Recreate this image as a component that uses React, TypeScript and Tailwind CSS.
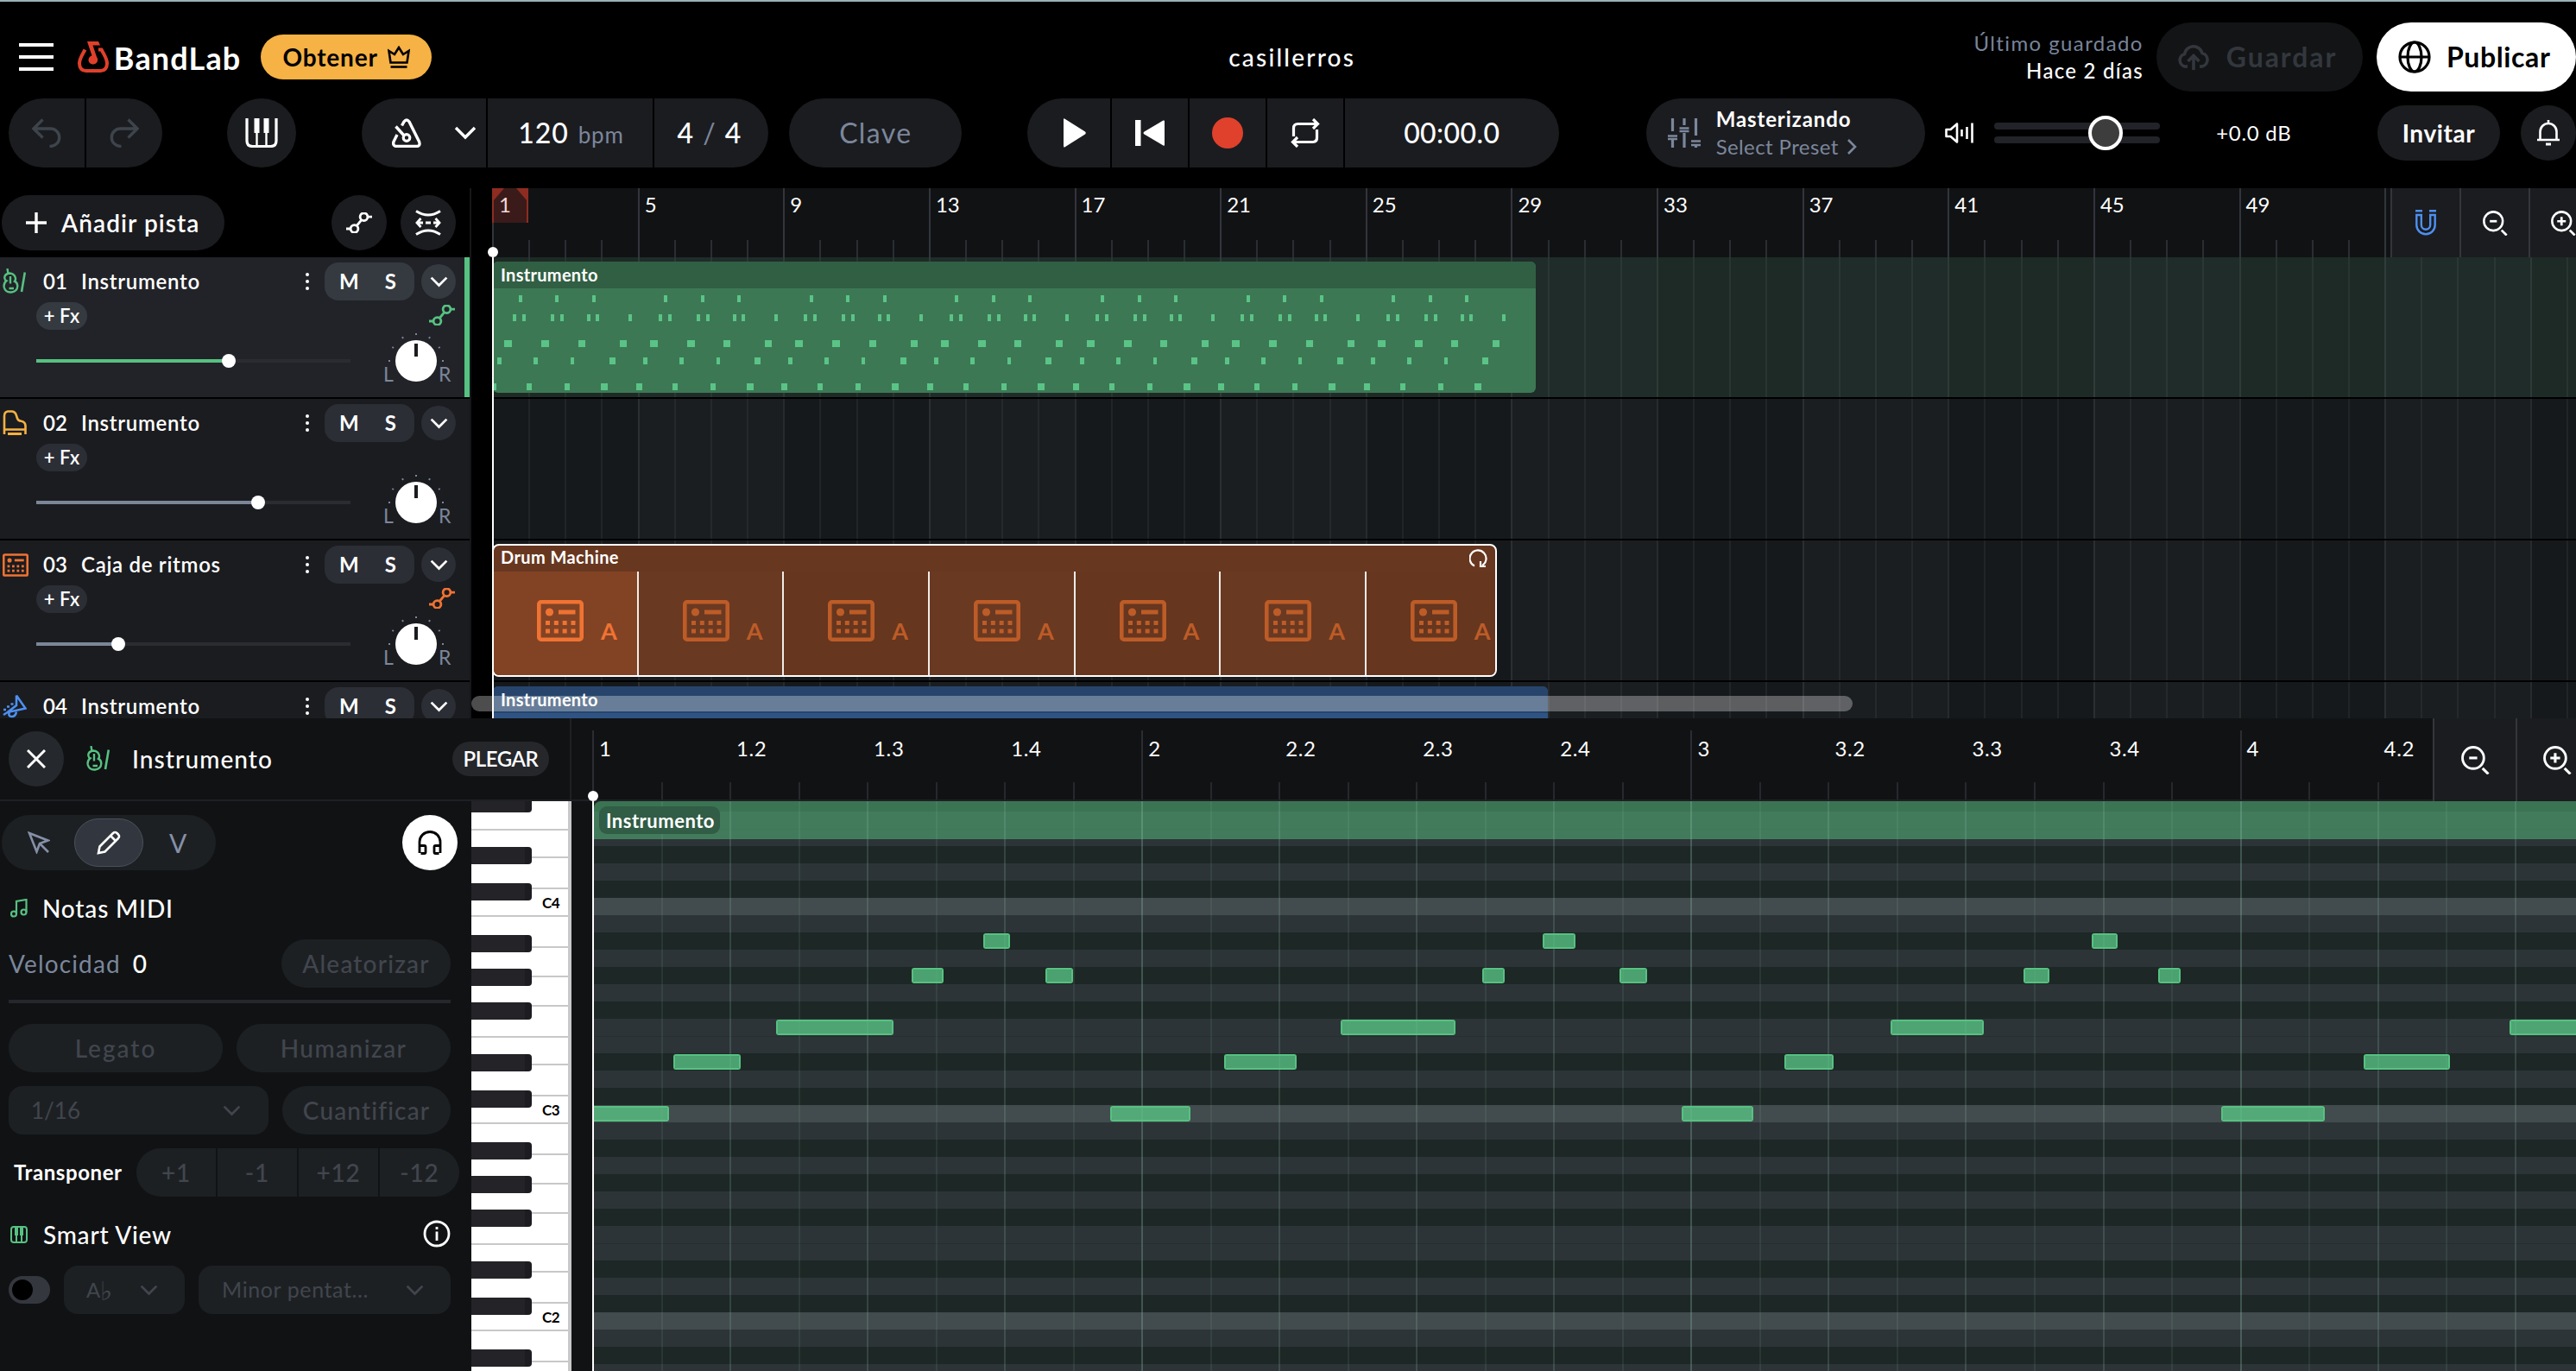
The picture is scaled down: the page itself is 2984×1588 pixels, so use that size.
import type { ReactNode } from 'react';

const BAR_NUMBERS = [1, 5, 9, 13, 17, 21, 25, 29, 33, 37, 41, 45, 49, 53];

type NoteRow = { y: string; notes: [number, number][] };

/** One four-bar phrase of the arrangement clip: x offset and width of each note. */
const PHRASE: NoteRow[] = [
  { y: 'top-[39px]', notes: [[29.5, 4], [72, 4], [114.5, 4]] },
  { y: 'top-[61px]', notes: [[23, 4], [34, 4], [67, 4], [78, 4], [109, 4], [119, 4], [157, 4]] },
  { y: 'top-[91px]', notes: [[13, 9], [56, 9], [98.5, 8], [146.5, 8]] },
  { y: 'top-[111px]', notes: [[5, 5], [47, 5], [90, 4], [134.5, 7]] },
  { y: 'top-[141px]', notes: [[-3, 7], [39, 6], [83, 6], [125, 8]] },
];

/** Editor notes: page y, page x and width. */
const NOTES: [number, number, number][] = [
  [1281, 686, 89], [1221, 779.7, 78], [1181, 899, 136], [1121, 1056, 37], [1081, 1139, 31], [1121, 1211, 32],
  [1281, 1286, 93], [1221, 1418, 84], [1181, 1553, 133], [1121, 1717, 26], [1081, 1787, 38], [1121, 1876, 32],
  [1281, 1948, 83], [1221, 2067, 57], [1181, 2190, 108], [1121, 2344, 30], [1081, 2423, 30], [1121, 2500, 26],
  [1281, 2573, 120], [1221, 2738, 100], [1181, 2907, 100],
];

const EDITOR_BEATS = ['1', '1.2', '1.3', '1.4', '2', '2.2', '2.3', '2.4', '3', '3.2', '3.3', '3.4', '4', '4.2', '4.3'];
const OCTAVE_ROWS = ['w', 'b', 'w', 'b', 'w', 'b', 'w', 'w', 'b', 'w', 'b', 'c'];
const WHITE_KEYS = ['h-[36px]', 'h-[34px]', 'h-[34px]', 'h-[36px]', 'h-[32px]', 'h-[36px]', 'h-[32px]'];
const BLACK_KEYS = ['top-[21px]', 'top-[60px]', 'top-[99px]', 'top-[159px]', 'top-[201px]'];

/* ---------- icons ---------- */

function Svg({ box, className, children }: { box: string; className: string; children: ReactNode }) {
  return (
    <svg viewBox={box} className={`shrink-0 ${className}`} fill="none" stroke="currentColor" strokeWidth={4}>
      {children}
    </svg>
  );
}

function Chevron({ className }: { className: string }) {
  return (
    <Svg box="0 0 26 16" className={className}>
      <path d="M2 2l11 11L24 2" strokeWidth={3.4} />
    </Svg>
  );
}

function Logo() {
  return (
    <Svg box="0 0 36 36" className="h-[36px] w-[36px] text-[#e0402b]">
      <path d="M8.5 9.5C5 16 2 20 2 25.500C2 31 5 34 9.500 34H26.500C31 34 34 31 34 25.500C34 20 31 16 27.500 9.500H24" strokeWidth={4} />
      <path d="M11 0h13l2 4.500h-8.500L22 18a5 5 0 1 1-5.500-1.500z" fill="currentColor" stroke="none" />
      <circle cx="17.500" cy="21.500" r="5" fill="currentColor" stroke="none" />
    </Svg>
  );
}

function Crown() {
  return (
    <Svg box="0 0 26 26" className="h-[26px] w-[26px] text-black">
      <path d="M3.500 19.500L1.500 6l6.500 4L13 2l5 8 6.500-4-2 13.500z" strokeWidth={2.600} />
      <path d="M3.500 24.500h19" strokeWidth={2.600} />
    </Svg>
  );
}

function Undo({ flip }: { flip?: boolean }) {
  return (
    <Svg box="0 0 34 34" className={flip ? 'h-[34px] w-[34px] -scale-x-100 text-[#3d444c]' : 'h-[34px] w-[34px] text-[#3d444c]'}>
      <path d="M12.500 1.500L2 12l10.500 10.500M2.500 12H21.500a10.200 10.200 0 0 1 0 20.400h-1" strokeWidth={3.400} />
    </Svg>
  );
}

function Piano({ className }: { className: string }) {
  return (
    <Svg box="0 0 38 34" className={className}>
      <path d="M2 0v26q0 6.500 6.500 6.500h21q6.500 0 6.500-6.500V0" strokeWidth={3.200} />
      <path d="M10.500 0h6v17h-1.800v15h-2.400V17h-1.800zM21.500 0h6v17h-1.800v15h-2.400V17h-1.800z" fill="currentColor" stroke="none" />
    </Svg>
  );
}

function Metronome() {
  return (
    <Svg box="0 0 34 34" className="h-[34px] w-[34px] text-white">
      <path d="M11.500 8.500l2.500-4.500q3-4 6 0L31.500 27q2 5.500-3.500 5.500H6q-5.500 0-4-5.500l4-8" strokeWidth={3.400} />
      <path d="M4.500 9.500L14.500 20.500" strokeWidth={3.400} />
      <circle cx="17" cy="22.500" r="3.800" strokeWidth={3.200} />
    </Svg>
  );
}

function Loop() {
  return (
    <Svg box="0 0 34 34" className="h-[34px] w-[34px] text-white">
      <path d="M3.500 21V11.500q0-5 5-5H31M26 1l5.500 5.500L26 12M30.500 13v9.500q0 5-5 5H3M8 22l-5.500 5.500L8 33" strokeWidth={3.200} />
    </Svg>
  );
}

function Mixer() {
  return (
    <Svg box="0 0 38 34" className="h-[34px] w-[38px] text-[#7b879b]">
      <path d="M5.500 0v15M5.500 24v10M19 0v8M19 17v17M32.500 0v20M32.500 31v3" strokeWidth={3.200} />
      <path d="M0 20.500h11M0 24h11M13.500 11.500h11M13.500 15h11M27 26.500h11M27 31h11" strokeWidth={2.600} />
    </Svg>
  );
}

function Speaker() {
  return (
    <Svg box="0 0 34 26" className="h-[26px] w-[34px] text-white">
      <path d="M1.500 9h5L14 2.500v21L6.500 17h-5z" strokeWidth={2.600} strokeLinejoin="round" />
      <path d="M19.500 9v8M25.500 6v14M31.500 1.500v23" strokeWidth={2.600} />
    </Svg>
  );
}

function Bell() {
  return (
    <Svg box="0 0 26 30" className="h-[30px] w-[26px] text-white">
      <path d="M0 23h26M3.500 22V13.500a9.500 9.500 0 0 1 19 0V22M13 0v4" strokeWidth={2.600} />
      <path d="M10 28h6" strokeWidth={3} />
    </Svg>
  );
}

function Cloud() {
  return (
    <Svg box="0 0 38 30" className="h-[30px] w-[38px] text-[#33373d]">
      <path d="M12 26H9A7.500 7.500 0 0 1 8.500 11.500a10.500 10.500 0 0 1 20.500-1A8 8 0 0 1 29 26h-3M19 30V14M12.500 20l6.500-6.500L25.500 20" strokeWidth={3.600} />
    </Svg>
  );
}

function Globe() {
  return (
    <Svg box="0 0 38 38" className="h-[38px] w-[38px] text-black">
      <circle cx="19" cy="19" r="17" strokeWidth={3.200} />
      <ellipse cx="19" cy="19" rx="8" ry="17" strokeWidth={3.200} />
      <path d="M2 19h34" strokeWidth={3.200} />
    </Svg>
  );
}

function Automation({ className }: { className: string }) {
  return (
    <Svg box="0 0 30 24" className={className}>
      <circle cx="9.500" cy="19" r="4.400" strokeWidth={2.800} />
      <circle cx="20.500" cy="5.200" r="4.400" strokeWidth={2.800} />
      <path d="M0 19h5M25 5.200h5M12.200 15.500l5.600-6.800" strokeWidth={2.800} />
    </Svg>
  );
}

function Stretch() {
  return (
    <Svg box="0 0 30 30" className="h-[30px] w-[30px] text-white">
      <path d="M1 1.500q14 9 28 0M1 28.500q14-9 28 0M6.500 10L2 15l4.500 5M23.500 10l4.500 5-4.500 5M3 15h6M12 15h6M21 15h6" strokeWidth={2.800} />
    </Svg>
  );
}

function Zoom({ plus, className }: { plus?: boolean; className: string }) {
  return (
    <Svg box="0 0 32 32" className={className}>
      <circle cx="13.500" cy="13.500" r="12" strokeWidth={2.800} />
      <path d={plus ? 'M8 13.500h11M13.500 8v11' : 'M9 13.500h9'} strokeWidth={3} />
      <path d="M24 25l6.500 6.500" strokeWidth={3} />
    </Svg>
  );
}

function Magnet() {
  return (
    <Svg box="0 0 24 30" className="h-[30px] w-[24px] text-[#4d90f0]">
      <path d="M0 1.300h8M16 1.300h8" strokeWidth={2.600} />
      <path d="M1.300 6h5.500v11.500a5.200 5.200 0 0 0 10.400 0V6h5.500v11.500a10.700 10.700 0 0 1-21.400 0z" strokeWidth={2.400} />
    </Svg>
  );
}

function Violin({ className }: { className: string }) {
  return (
    <Svg box="0 0 28 30" className={className}>
      <path d="M5.500 0l1 6.500M8 5.500Q2 6.500 2.300 11q.2 2.300 2.200 3.300Q.8 17 1.800 22q1.700 6 8.200 5.500 7-1 7.300-7 0-4.200-3.300-5.700 1.700-2 .5-5Q13 5.800 8 5.500zM9 9v8.500M7.500 23h5.500" strokeWidth={2.400} />
      <path d="M25.800 4.500L22 27" strokeWidth={2.600} />
    </Svg>
  );
}

function GrandPiano() {
  return (
    <Svg box="0 0 28 30" className="h-[30px] w-[28px] text-[#f5b143]">
      <path d="M2 28V7Q2 2 6 1.500h5q4 .5 5 5l1 3q1.200 3 4.500 3.200Q26 13.200 26.500 18v10M2 22.500h24.500" strokeWidth={2.600} />
      <path d="M6 27.500h16" strokeWidth={3} />
    </Svg>
  );
}

function Guitar() {
  return (
    <Svg box="0 0 28 28" className="h-[28px] w-[28px] text-[#4d90f0]">
      <path d="M16 1.500L26.500 16.500 8 20.500Q6 26 10.500 26t5.500-5.500M16 1.500V13L5 21.500 1 24" strokeWidth={2.600} />
      <path d="M1 18h3M5 14.500h3M9.500 11.500h3" strokeWidth={2.600} />
    </Svg>
  );
}

function DrumPad({ className }: { className: string }) {
  return (
    <Svg box="0 0 54 48" className={className}>
      <rect x="2.300" y="2.300" width="49.400" height="43.400" rx="2.500" strokeWidth={4.600} />
      <circle cx="14.500" cy="14" r="4.600" fill="currentColor" stroke="none" />
      <path d="M25 14h19.500" strokeWidth={5} />
      <path d="M10 26.500h34.500M10 36h34.500" strokeWidth={5} strokeDasharray="5 4.830" />
    </Svg>
  );
}

/* ---------- top bars ---------- */

function TopHeader() {
  return (
    <header className="flex h-[112px] items-center pt-[16px]">
      <div className="ml-[22px] flex w-[40px] flex-col gap-[10px]">
        <div className="h-[4px] bg-white" />
        <div className="h-[4px] bg-white" />
        <div className="h-[4px] bg-white" />
      </div>
      <div className="ml-[28px] flex w-[213px] items-center">
        <Logo />
        <span className="mt-[2px] ml-[6px] text-[36px] leading-none font-bold tracking-[1.15px]">BandLab</span>
      </div>
      <button className="flex h-[52px] w-[199px] items-center justify-center gap-[11px] rounded-full bg-[#f6b244] text-[28px] font-bold tracking-[0.8px] text-black">
        Obtener <Crown />
      </button>
      <h1 className="ml-[923px] w-[150px] text-[28px] font-medium tracking-[2.2px]">casillerros</h1>
      <div className="ml-[709px] flex w-[202px] flex-col items-end text-[24px] leading-[32px]">
        <span className="tracking-[1.4px] text-[#78849a]">Último guardado</span>
        <span className="font-medium tracking-[1.27px]">Hace 2 días</span>
      </div>
      <button className="ml-[15px] flex h-[80px] w-[240px] items-center gap-[19px] rounded-full bg-[#121416] pl-[24px] text-[32px] font-bold tracking-[1.9px] text-[#33373d]">
        <Cloud /> Guardar
      </button>
      <button className="ml-[16px] flex h-[80px] w-[231px] shrink-0 items-center gap-[18px] rounded-full bg-white pl-[25px] text-[32px] font-bold tracking-[0.6px] text-black">
        <Globe /> Publicar
      </button>
    </header>
  );
}

const CELL = 'flex h-[80px] items-center justify-center bg-[#1b1c20]';

function Toolbar() {
  return (
    <div className="flex h-[80px] items-center">
      <div className="ml-[10px] flex gap-[2px] overflow-hidden rounded-full">
        <div className="flex h-[80px] w-[88px] items-center justify-center bg-[#1b1c20]"><Undo /></div>
        <div className="flex h-[80px] w-[88px] items-center justify-center bg-[#1b1c20]"><Undo flip /></div>
      </div>
      <div className="ml-[75px] flex h-[80px] w-[80px] items-center justify-center rounded-full bg-[#1b1c20]">
        <Piano className="h-[34px] w-[38px] text-white" />
      </div>
      <div className="ml-[76px] flex gap-[2px] overflow-hidden rounded-full">
        <div className="flex h-[80px] w-[144px] items-center bg-[#1b1c20] pl-[35px]">
          <Metronome />
          <Chevron className="ml-[38px] h-[16px] w-[26px] text-white" />
        </div>
        <div className="flex h-[80px] w-[192px] items-center justify-center gap-[11px] bg-[#1b1c20] pl-[2px]">
          <span className="text-[32px] leading-[38px] font-medium tracking-[0.9px]">120</span>
          <span className="mt-[4px] text-[26px] leading-[38px] tracking-[0.9px] text-[#7b879b]">bpm</span>
        </div>
        <div className="flex h-[80px] w-[132px] items-center justify-center gap-[11px] bg-[#1b1c20] pr-[6px] text-[32px] font-medium">
          4 <span className="font-normal text-[#7b879b]">/</span> 4
        </div>
      </div>
      <div className="ml-[24px] flex h-[80px] w-[200px] items-center justify-center rounded-full bg-[#1b1c20] text-[32px] tracking-[1.36px] text-[#7b879b]">
        Clave
      </div>
      <div className="ml-[76px] flex gap-[2px] overflow-hidden rounded-full">
        <div className={`${CELL} w-[96px] pl-[14px]`}>
          <svg viewBox="0 0 26 34" className="h-[34px] w-[26px]"><path d="M0 1.500Q0-.5 2 1L25 15.500q1.500 1.500 0 3L2 33q-2 1.500-2-1z" fill="#fff" /></svg>
        </div>
        <div className={`${CELL} w-[88px]`}>
          <svg viewBox="0 0 34 30" className="h-[30px] w-[34px]"><path d="M0 0h6.500v30H0zM34 1.500v27q0 2-1.500 1L10.500 16.500q-2-1.500 0-3L32.500.5Q34 0 34 1.500z" fill="#fff" /></svg>
        </div>
        <div className={`${CELL} w-[88px]`}><div className="h-[36px] w-[36px] rounded-full bg-[#e0412c]" /></div>
        <div className={`${CELL} w-[88px]`}><Loop /></div>
        <div className={`${CELL} w-[248px] text-[32px] font-medium tracking-[0.4px]`}>00:00.0</div>
      </div>
      <div className="ml-[101px] flex h-[80px] w-[324px] items-center rounded-full bg-[#1b1c20] pl-[25px]">
        <Mixer />
        <div className="ml-[18px] flex flex-col text-[24px] leading-[32px]">
          <span className="font-bold tracking-[0.9px]">Masterizando</span>
          <span className="flex items-center gap-[9px] tracking-[0.4px] text-[#7b879b]">
            Select Preset
            <Svg box="0 0 12 18" className="h-[18px] w-[12px]"><path d="M2 1l8 8-8 8" strokeWidth={2.600} /></Svg>
          </span>
        </div>
      </div>
      <div className="ml-[23px]"><Speaker /></div>
      <div className="relative ml-[23px] flex w-[192px] flex-col gap-[8px]">
        <div className="h-[8px] rounded-full bg-[#222328]" />
        <div className="h-[8px] rounded-full bg-[#222328]" />
        <div className="absolute top-[-8px] left-[109px] h-[40px] w-[40px] rounded-full border-4 border-white bg-[#3d3d3e]" />
      </div>
      <span className="ml-[65px] w-[88px] text-[24px] tracking-[0.7px]">+0.0 dB</span>
      <button className="ml-[99px] flex h-[64px] w-[142px] items-center justify-center rounded-full bg-[#1b1c20] text-[28px] font-bold tracking-[0.6px]">Invitar</button>
      <button className="ml-[24px] flex h-[64px] w-[64px] shrink-0 items-center justify-center rounded-full bg-[#1b1c20]"><Bell /></button>
    </div>
  );
}

/* ---------- track list ---------- */

type Track = { num: string; name: string; icon: ReactNode; fill?: string; auto?: string; selected?: boolean };

const TRACKS: Track[] = [
  { num: '01', name: 'Instrumento', icon: <Violin className="h-[30px] w-[28px] text-[#57c182]" />, fill: 'w-[223px] bg-[#57c182]', auto: 'text-[#57c182]', selected: true },
  { num: '02', name: 'Instrumento', icon: <GrandPiano />, fill: 'w-[257px] bg-[#7b8797]' },
  { num: '03', name: 'Caja de ritmos', icon: <DrumPad className="h-[27px] w-[30px] text-[#f07332]" />, fill: 'w-[95px] bg-[#7b8797]', auto: 'text-[#f07332]' },
  { num: '04', name: 'Instrumento', icon: <Guitar /> },
];

function PanKnob() {
  return (
    <div className="ml-[38px] flex items-center text-[23px] leading-none text-[#7b879b]">
      <span className="mt-[31px] w-[12px]">L</span>
      <svg viewBox="0 0 66 70" className="-mx-[7px] h-[70px] w-[66px]">
        <g fill="#7b879b">
          {[-90, -60, -30, 0, 30, 60, 90].map((a) => (
            <rect key={a} x="32" y="3" width="2" height="2" transform={`rotate(${a} 33 35)`} />
          ))}
        </g>
        <circle cx="33" cy="35" r="24" fill="#fff" />
        <rect x="31" y="15" width="4" height="15" fill="#1b1c20" />
      </svg>
      <span className="mt-[31px]">R</span>
    </div>
  );
}

function TrackRow({ track }: { track: Track }) {
  const pill = track.selected ? 'bg-[#343a40]' : 'bg-[#2c2e36]';
  return (
    <div className={`flex h-[164px] shrink-0 border-b-2 border-black ${track.selected ? 'bg-[#222328]' : 'bg-[#1b1c20]'}`}>
      <div className="flex w-[538px] flex-col">
        <div className="flex h-[52px] items-center pt-[4px]">
          <div className="flex w-[50px] pl-[3px]">{track.icon}</div>
          <span className="w-[44px] text-[24px] leading-none font-semibold">{track.num}</span>
          <span className="w-[260px] text-[24px] leading-none font-semibold tracking-[0.7px]">{track.name}</span>
          <div className="flex w-[22px] flex-col gap-[4px]">
            <div className="h-[4px] w-[4px] rounded-full bg-white" />
            <div className="h-[4px] w-[4px] rounded-full bg-white" />
            <div className="h-[4px] w-[4px] rounded-full bg-white" />
          </div>
          <div className={`flex h-[44px] w-[104px] items-center justify-between rounded-[16px] pr-[21px] pl-[17px] text-[24px] font-bold ${pill}`}>
            <span>M</span><span>S</span>
          </div>
          <div className={`ml-[8px] flex h-[40px] w-[40px] items-center justify-center rounded-full ${pill}`}>
            <Chevron className="h-[13px] w-[21px] text-white" />
          </div>
        </div>
        {track.fill && (
          <>
            <div className="flex h-[32px] items-start justify-between pr-[11px] pl-[42px]">
              <span className={`flex h-[32px] w-[59px] items-center justify-center rounded-full pb-px text-[22px] font-semibold ${pill}`}>+ Fx</span>
              {track.auto && <Automation className={`mt-[3px] h-[24px] w-[30px] ${track.auto}`} />}
            </div>
            <div className="flex h-[72px] items-center pl-[42px]">
              <div className="flex h-[4px] w-[364px] bg-[#2b2c32]">
                <div className={`h-[4px] ${track.fill}`} />
                <div className="-mt-[6px] -ml-[8px] h-[16px] w-[16px] rounded-full bg-white" />
              </div>
              <PanKnob />
            </div>
          </>
        )}
      </div>
      {track.selected && <div className="w-[6px] bg-[#57c182]" />}
    </div>
  );
}

function TrackPanel() {
  return (
    <aside className="flex w-[544px] shrink-0 flex-col overflow-hidden">
      <div className="flex h-[80px] shrink-0 items-center">
        <button className="ml-[2px] flex h-[64px] w-[258px] items-center rounded-full bg-[#1b1c20] pl-[28px] text-[28px] font-semibold tracking-[1.07px]">
          <Svg box="0 0 24 24" className="mr-[17px] h-[24px] w-[24px]"><path d="M12 0v24M0 12h24" strokeWidth={3.400} /></Svg>
          Añadir pista
        </button>
        <button className="ml-[124px] flex h-[64px] w-[64px] items-center justify-center rounded-full bg-[#1b1c20]">
          <Automation className="h-[24px] w-[30px] text-white" />
        </button>
        <button className="ml-[16px] flex h-[64px] w-[64px] items-center justify-center rounded-full bg-[#1b1c20]"><Stretch /></button>
      </div>
      {TRACKS.map((t) => <TrackRow key={t.num} track={t} />)}
    </aside>
  );
}

/* ---------- arrangement timeline ---------- */

function Lane({ tinted, children }: { tinted?: boolean; children?: ReactNode }) {
  return (
    <div className="relative flex h-[164px] shrink-0 border-b-2 border-black">
      {BAR_NUMBERS.concat(57).map((n, i) => {
        const light = i % 2 === 1;
        const bg = tinted ? (light ? 'bg-[#1f2c2a]' : 'bg-[#1d2a25]') : light ? 'bg-[#1b1e21]' : 'bg-[#16191c]';
        return (
          <div key={n} className={`flex w-[168.63px] shrink-0 ${bg}`}>
            {[0, 1, 2, 3].map((k) => (
              <div key={k} className={`flex-1 border-l-2 ${k === 0 ? 'border-white/8' : 'border-white/5'}`} />
            ))}
          </div>
        );
      })}
      {children}
    </div>
  );
}

function Ruler() {
  return (
    <div className="relative flex h-[80px] shrink-0 bg-[#111214]">
      {BAR_NUMBERS.map((n) => (
        <div key={n} className="relative flex w-[168.63px] shrink-0 items-end border-l-2 border-[#33353d]">
          {n < 53 && <span className={`absolute top-[7px] left-[6px] z-10 text-[24px] leading-[24px] ${n === 1 ? 'text-[#f3d9d6]' : 'text-white'}`}>{n}</span>}
          {n < 53 && [0, 1, 2, 3].map((k) => (
            <div key={k} className={`h-[20px] flex-1 ${k === 0 ? '' : 'border-l-2 border-[#2b2d33]'}`} />
          ))}
        </div>
      ))}
      <svg viewBox="0 0 42 40" className="absolute top-0 left-0 h-[40px] w-[42px]">
        <path d="M0 0h42v40H0z" fill="#3a1b1a" />
        <path d="M0 0h14L2 14v26H0zM42 0H28l12 14v26h2z" fill="#8e2c21" />
      </svg>
      <div className="absolute top-0 right-0 flex h-[80px] w-[215px] bg-[#1b1c20]">
        <div className="flex w-[80px] items-center justify-center border-l-2 border-[#34363b]"><Magnet /></div>
        <div className="flex w-[80px] items-center justify-center border-l-2 border-[#34363b]"><Zoom className="h-[29px] w-[29px] text-white" /></div>
        <div className="flex w-[55px] items-center border-l-2 border-[#34363b] pl-[24px]"><Zoom plus className="h-[29px] w-[29px] text-white" /></div>
      </div>
    </div>
  );
}

function ClipLabel({ children, className }: { children: ReactNode; className: string }) {
  return (
    <div className={`flex h-[31px] items-center pb-[2px] pl-[9px] text-[20px] font-bold tracking-[0.3px] ${className}`}>{children}</div>
  );
}

function GreenClip() {
  return (
    <div className="absolute top-[5px] left-px h-[152px] w-[1208px] overflow-hidden rounded-[6px] bg-[#3d7855]">
      <ClipLabel className="bg-[#315f43]">Instrumento</ClipLabel>
      {[0, 1, 2, 3, 4, 5, 6].map((p) =>
        PHRASE.map((row) =>
          row.notes.map(([x, w]) => (
            <div key={`${p}-${row.y}-${x}`} className={`absolute h-[8px] bg-[#5ac486] ${row.y}`} style={{ left: p * 168.63 + x, width: w }} />
          )),
        ),
      )}
    </div>
  );
}

function DrumClip() {
  return (
    <div className="absolute top-[4px] left-0 flex h-[154px] w-[1164px] flex-col overflow-hidden rounded-[8px] border-2 border-white bg-[#68371f]">
      <div className="flex h-[30px] items-center justify-between pr-[8px] pl-[8px]">
        <span className="-mt-[4px] text-[20px] font-bold tracking-[0.4px]">Drum Machine</span>
        <Svg box="0 0 22 24" className="h-[24px] w-[22px] text-white">
          <path d="M6 20.500A9.500 9.500 0 1 1 15 20" strokeWidth={2.200} />
          <path d="M13 15v6h6" strokeWidth={2.200} />
        </Svg>
      </div>
      <div className="-ml-px flex flex-1">
        {[0, 1, 2, 3, 4, 5, 6].map((n) => (
          <div
            key={n}
            className={`flex w-[168.63px] shrink-0 border-r-2 border-white/90 pt-[33px] pl-[51px] ${
              n === 0 ? 'bg-[#824325] text-[#f07332]' : n % 2 ? 'bg-[#6a3922] text-[#bd5c27]' : 'bg-[#66361f] text-[#bd5c27]'
            }`}
          >
            <DrumPad className="h-[48px] w-[54px]" />
            <span className="mt-[24px] ml-[20px] text-[27px] leading-[24px] font-bold">A</span>
          </div>
        ))}
      </div>
    </div>
  );
}

function Arrangement() {
  return (
    <section className="relative flex h-[614px] shrink-0 overflow-hidden">
      <TrackPanel />
      <div className="w-[2px] bg-[#16171a]" />
      <div className="ml-[24px] flex flex-1 flex-col overflow-hidden">
        <Ruler />
        <Lane tinted><GreenClip /></Lane>
        <Lane />
        <Lane><DrumClip /></Lane>
        <Lane>
          <div className="absolute top-[5px] left-px h-[80px] w-[1222px] overflow-hidden rounded-[6px] bg-[#2f5484]">
            <ClipLabel className="bg-[#27456c]">Instrumento</ClipLabel>
          </div>
        </Lane>
      </div>
      <div className="absolute top-[80px] left-[570px] h-[534px] w-[2px] bg-white" />
      <div className="absolute top-[68px] left-[565px] h-[12px] w-[12px] rounded-full bg-white" />
      <div className="absolute top-[588px] left-[546px] h-[18px] w-[1600px] rounded-full bg-white/30" />
    </section>
  );
}

/* ---------- MIDI editor ---------- */

const OFF = 'flex items-center bg-[#1d2023] font-medium text-[#41464e]';

function EditorSidebar() {
  return (
    <div className="flex w-[546px] shrink-0 flex-col pt-[16px]">
      <div className="flex items-center justify-between pr-[16px] pl-[2px]">
        <div className="flex h-[64px] w-[248px] items-center rounded-full bg-[#1d2023] text-[#8590a8]">
          <Svg box="0 0 26 26" className="ml-[30px] h-[26px] w-[26px]">
            <path d="M2 2l21.500 8.500L14 14l-3.500 9.500zM14 14l10 10" strokeWidth={2.600} />
          </Svg>
          <div className="ml-[28px] flex h-[56px] w-[80px] items-center justify-center rounded-full border border-[#4a505c] bg-[#32363e] text-white">
            <Svg box="0 0 28 28" className="h-[28px] w-[28px]">
              <path d="M2 26l1.500-7.500L19 3q2.200-2 4.500 0l1.500 1.500q2 2.300 0 4.500L9.500 24.500zM16 6l6 6" strokeWidth={2.600} />
            </Svg>
          </div>
          <span className="ml-[30px] text-[30px]">V</span>
        </div>
        <div className="flex h-[64px] w-[64px] items-center justify-center rounded-full bg-white text-black">
          <Svg box="0 0 28 28" className="h-[28px] w-[28px]">
            <path d="M2 26V13a12 11.500 0 0 1 24 0v13M2 17.500h5.500q1.500 0 1.500 1.500v6q0 1.500-1.500 1.500H3.500M26 17.500h-5.500q-1.500 0-1.500 1.500v6q0 1.500 1.500 1.500h4" strokeWidth={2.800} />
          </Svg>
        </div>
      </div>
      <div className="mt-[27px] mb-px flex h-[34px] items-center pl-[12px]">
        <Svg box="0 0 20 22" className="h-[22px] w-[20px] text-[#57c182]">
          <circle cx="4" cy="17.500" r="3" strokeWidth={2.200} />
          <circle cx="15.500" cy="15.500" r="3" strokeWidth={2.200} />
          <path d="M7 17.500V3l11.500-2v14.500" strokeWidth={2.200} />
        </Svg>
        <span className="ml-[17px] text-[28px] font-medium tracking-[0.85px]">Notas MIDI</span>
      </div>
      <div className="mt-[18px] flex h-[56px] items-center pr-[24px] pl-[10px] text-[28px]">
        <span className="tracking-[1.15px] text-[#7b879b]">Velocidad</span>
        <span className="ml-[14px] font-medium">0</span>
        <span className={`${OFF} ml-auto h-[56px] w-[196px] justify-center rounded-full text-[28px] tracking-[1.19px]`}>Aleatorizar</span>
      </div>
      <div className="mt-[14px] mr-[24px] ml-[10px] h-[4px] bg-[#26272c]" />
      <div className="mt-[24px] flex gap-[16px] pl-[10px]">
        <span className={`${OFF} h-[56px] w-[248px] justify-center rounded-full text-[28px] tracking-[2px]`}>Legato</span>
        <span className={`${OFF} h-[56px] w-[248px] justify-center rounded-full text-[28px] tracking-[1.48px]`}>Humanizar</span>
      </div>
      <div className="mt-[16px] flex gap-[16px] pl-[10px]">
        <span className={`${OFF} h-[56px] w-[301px] justify-between rounded-[16px] pr-[32px] pl-[26px]`}>
          <span className="text-[26px] font-normal">1/16</span>
          <Chevron className="h-[13px] w-[21px]" />
        </span>
        <span className={`${OFF} h-[56px] w-[195px] justify-center rounded-full text-[28px] tracking-[1.14px]`}>Cuantificar</span>
      </div>
      <div className="mt-[16px] flex items-center pl-[16px]">
        <span className="w-[142px] text-[24px] font-bold tracking-[0.58px]">Transponer</span>
        <div className="flex gap-[2px] overflow-hidden rounded-full">
          {['+1', '-1', '+12', '-12'].map((s) => (
            <span key={s} className={`${OFF} h-[56px] w-[92px] justify-center text-[28px] tracking-[0.8px]`}>{s}</span>
          ))}
        </div>
      </div>
      <div className="mt-[26px] flex h-[36px] items-center pr-[24px] pl-[12px]">
        <div className="flex h-[20px] w-[20px] overflow-hidden rounded-[4px] border-2 border-[#57c182]">
          <Svg box="0 0 16 16" className="h-[16px] w-[16px] text-[#57c182]"><path d="M5 0v16M11 0v16" strokeWidth={2} /><path d="M5 0v9M11 0v9" strokeWidth={4} /></Svg>
        </div>
        <span className="ml-[18px] text-[28px] font-medium tracking-[0.77px]">Smart View</span>
        <Svg box="0 0 32 32" className="mb-[2px] ml-auto h-[32px] w-[32px]">
          <circle cx="16" cy="16" r="14" strokeWidth={2.800} />
          <path d="M16 8v3M16 13.500V24" strokeWidth={2.800} />
        </Svg>
      </div>
      <div className="mt-[18px] flex h-[56px] items-center gap-[16px] pl-[10px]">
        <div className="flex h-[32px] w-[48px] items-center rounded-full bg-[#34373e] pl-[4px]"><div className="h-[24px] w-[24px] rounded-full bg-black" /></div>
        <span className={`${OFF} h-[56px] w-[140px] justify-between rounded-[16px] pr-[31px] pl-[26px]`}>
          <span className="flex items-center text-[24px] leading-none font-normal">A<span className="text-[30px]">♭</span></span>
          <Chevron className="h-[13px] w-[21px]" />
        </span>
        <span className={`${OFF} h-[56px] w-[292px] justify-between rounded-[16px] pr-[31px] pl-[27px]`}>
          <span className="text-[25px] font-normal tracking-[0.6px]">Minor pentat...</span>
          <Chevron className="h-[13px] w-[21px]" />
        </span>
      </div>
    </div>
  );
}

function Keyboard() {
  return (
    <div className="flex h-[660px] w-[116px] shrink-0 flex-col overflow-hidden">
      <div className="-mt-[106px] flex flex-col">
        {['C4', 'C3', 'C2', ''].map((label) => (
          <div key={label} className="relative flex h-[240px] shrink-0 flex-col">
            {WHITE_KEYS.map((h, i) => (
              <div key={i} className={`flex items-center border-r-4 border-b-2 border-[#c8c8c8] bg-white ${h}`}>
                {i === 6 && <span className="ml-[82px] text-[17px] leading-none font-bold tracking-[-0.5px] text-black">{label}</span>}
              </div>
            ))}
            {BLACK_KEYS.map((t) => (
              <div key={t} className={`absolute left-0 h-[20px] w-[70px] rounded-r-[4px] border-r-[8px] border-[#1d1d21] bg-[#232328] ${t}`} />
            ))}
          </div>
        ))}
      </div>
    </div>
  );
}

function NoteGrid() {
  return (
    <div className="relative h-[660px] flex-1 overflow-hidden">
      <div className="-mt-[108px] flex flex-col">
        {[0, 1, 2, 3].map((o) =>
          OCTAVE_ROWS.map((r, i) => (
            <div
              key={`${o}-${i}`}
              className={`h-[20px] shrink-0 ${r === 'b' ? 'bg-[#1d2725]' : r === 'c' ? 'bg-[#424b4d]' : 'bg-[#2c3437]'} ${i === 7 ? 'border-t border-[#262e30]' : ''}`}
            />
          )),
        )}
      </div>
      <div className="absolute inset-x-0 top-0 h-[44px] rounded-tl-[8px] bg-[#57c182]/50" />
      <div className="absolute inset-y-0 left-[-2px] flex">
        {EDITOR_BEATS.map((b) => (
          <div key={b} className={`flex w-[159.06px] shrink-0 border-l-2 ${b.length === 1 ? 'border-[#8fc0b0]/30' : 'border-[#8fc0b0]/20'}`}>
            <div className="flex-1" />
            <div className="flex-1 border-l-2 border-[#8fc0b0]/10" />
          </div>
        ))}
      </div>
      {NOTES.map(([y, x, w]) => (
        <div
          key={`${x}-${y}`}
          className="absolute h-[18px] rounded-[3px] border-2 border-[#57c182] bg-[#57c182]/80 bg-clip-padding"
          style={{ top: y - 928, left: x - 688, width: w }}
        />
      ))}
      <div className="absolute top-[6px] left-[6px] flex h-[32px] w-[140px] items-center rounded-[9px] bg-[#315c45] pl-[8px] text-[22px] font-bold tracking-[0.5px]">
        Instrumento
      </div>
    </div>
  );
}

function Editor() {
  return (
    <section className="relative flex flex-1 flex-col bg-[#111214]">
      <div className="flex h-[96px] shrink-0 border-b-2 border-[#1f2024]">
        <div className="flex w-[662px] shrink-0 items-center border-r-2 border-[#1f2024]">
          <button className="ml-[10px] flex h-[64px] w-[64px] items-center justify-center rounded-full bg-[#25282c]">
            <Svg box="0 0 22 22" className="h-[22px] w-[22px]"><path d="M1 1l20 20M21 1L1 21" strokeWidth={3} /></Svg>
          </button>
          <Violin className="ml-[26px] h-[30px] w-[28px] text-[#57c182]" />
          <span className="ml-[25px] text-[28px] font-medium tracking-[1.09px]">Instrumento</span>
          <button className="mr-[24px] ml-auto flex h-[40px] w-[112px] items-center justify-center rounded-full bg-[#25272b] text-[24px] font-semibold tracking-[-0.45px]">PLEGAR</button>
        </div>
        <div className="ml-[24px] flex flex-1 overflow-hidden pt-[14px]">
          {EDITOR_BEATS.slice(0, 14).map((b) => (
            <div key={b} className="relative flex w-[159.06px] shrink-0 items-end">
              <div className={`flex-1 border-l-2 ${b.length === 1 ? 'h-[80px] border-[#2b2d33]' : 'h-[20px] border-[#26282d]'}`} />
              <div className="h-[20px] flex-1 border-l-2 border-[#26282d]" />
              <span className="absolute top-[9px] left-[8px] text-[24px] leading-[24px] tracking-[0.6px]">{b}</span>
            </div>
          ))}
        </div>
      </div>
      <div className="absolute top-0 right-0 flex h-[96px] w-[166px] bg-[#1b1c20]">
        <div className="flex w-[96px] items-center justify-center border-l-2 border-[#34363b]"><Zoom className="h-[33px] w-[33px] text-white" /></div>
        <div className="flex flex-1 items-center border-l-2 border-[#34363b] pl-[30px]"><Zoom plus className="h-[33px] w-[33px] text-white" /></div>
      </div>
      <div className="flex flex-1">
        <EditorSidebar />
        <Keyboard />
        <div className="w-[26px]" />
        <NoteGrid />
      </div>
      <div className="absolute top-[96px] left-[686px] h-[660px] w-[2px] bg-white" />
      <div className="absolute top-[84px] left-[681px] h-[12px] w-[12px] rounded-full bg-white" />
    </section>
  );
}

export default function App() {
  return (
    <div className="flex h-[1588px] w-[2984px] flex-col overflow-hidden bg-black font-['Lato','Noto_Sans',sans-serif] whitespace-nowrap text-white select-none">
      <div className="h-[2px] shrink-0 bg-[#9bb1b7]" />
      <TopHeader />
      <Toolbar />
      <div className="h-[24px] shrink-0" />
      <Arrangement />
      <Editor />
    </div>
  );
}
